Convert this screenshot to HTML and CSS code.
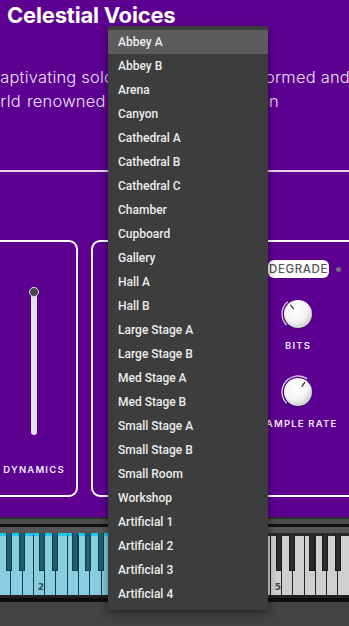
FILE: index.html
```html
<!DOCTYPE html>
<html lang="en">
<head>
    <meta charset="UTF-8">
    <meta name="viewport" content="width=device-width, initial-scale=1.0">
    <title>Celestial Voices</title>
    <link rel="stylesheet" href="styles.css">
</head>
<body>
    <div class="ui">
        <h1 class="title">Celestial Voices</h1>
        <p class="blurb">
            <span class="line line-1">Captivating solo vocals, purely performed and</span>
            <span class="line line-2">world renowned soloists, recorded on</span>
        </p>
        <hr class="rule">

        <div class="panels">
            <section class="panel panel-dyn">
                <div class="slider">
                    <div class="track"></div>
                    <div class="thumb"></div>
                </div>
                <div class="label">DYNAMICS</div>
            </section>

            <section class="panel panel-fx">
                <div class="reverb"></div>
                <div class="degrade">
                    <div class="degrade-head">
                        <span class="pill">DEGRADE</span>
                        <span class="led"></span>
                    </div>
                    <div class="knob knob-bits">
                        <svg width="34" height="34" viewBox="0 0 34 34">
                            <defs>
                                <radialGradient id="cap" cx="40%" cy="35%" r="70%">
                                    <stop offset="0" stop-color="#ffffff"/>
                                    <stop offset="0.6" stop-color="#f4f4f4"/>
                                    <stop offset="1" stop-color="#c9c9c9"/>
                                </radialGradient>
                            </defs>
                            <path d="M5.69 28.31 A16 16 0 0 1 6.72 4.74" fill="none" stroke="#d9c4ea" stroke-width="1.4"/>
                            <circle cx="17" cy="17" r="14" fill="url(#cap)"/>
                            <line x1="12.5" y1="11.64" x2="9.6" y2="8.2" stroke="#333" stroke-width="1.3" stroke-linecap="round"/>
                        </svg>
                    </div>
                    <div class="label">BITS</div>
                    <div class="knob">
                        <svg width="34" height="34" viewBox="0 0 34 34">
                            <path d="M5.69 28.31 A16 16 0 0 1 26.18 3.89" fill="none" stroke="#d9c4ea" stroke-width="1.4"/>
                            <circle cx="17" cy="17" r="14" fill="url(#cap)"/>
                            <line x1="21.02" y1="11.27" x2="23.6" y2="7.6" stroke="#333" stroke-width="1.3" stroke-linecap="round"/>
                        </svg>
                    </div>
                    <div class="label">SAMPLE RATE</div>
                </div>
            </section>
        </div>
    </div>

    <div class="keybed">
        <div class="rail"></div>
        <div class="keys" id="keys"></div>
        <div class="base"></div>
    </div>

    <ul class="menu">
        <li class="active">Abbey A</li>
        <li>Abbey B</li>
        <li>Arena</li>
        <li>Canyon</li>
        <li>Cathedral A</li>
        <li>Cathedral B</li>
        <li>Cathedral C</li>
        <li>Chamber</li>
        <li>Cupboard</li>
        <li>Gallery</li>
        <li>Hall A</li>
        <li>Hall B</li>
        <li>Large Stage A</li>
        <li>Large Stage B</li>
        <li>Med Stage A</li>
        <li>Med Stage B</li>
        <li>Small Stage A</li>
        <li>Small Stage B</li>
        <li>Small Room</li>
        <li>Workshop</li>
        <li>Artificial 1</li>
        <li>Artificial 2</li>
        <li>Artificial 3</li>
        <li>Artificial 4</li>
    </ul>

    <script>
        // keyboard: one octave is 79px wide, C2 starts at x = 32
        const octave = 79;
        const whiteW = octave / 7;
        const semi = octave / 12;
        const c2 = 32.1;
        const whiteSteps = [0, 2, 4, 5, 7, 9, 11];
        const blackSteps = [1, 3, 6, 8, 10];
        const keys = document.getElementById('keys');

        // first visible key is G1
        const firstLeft = c2 - octave + 4 * whiteW;
        keys.style.paddingLeft = firstLeft + 'px';

        for (let oct = 1; oct <= 5; oct++) {
            const cLeft = c2 + (oct - 2) * octave;
            whiteSteps.forEach(function (step, i) {
                const left = cLeft + i * whiteW;
                if (left < firstLeft - 1 || left > 349) return;
                const key = document.createElement('div');
                key.className = 'white ' + (oct < 4 ? 'in-range' : 'out-range');
                if (step === 0) {
                    key.innerHTML = '<span class="oct">' + oct + '</span>';
                }
                keys.appendChild(key);
            });
            blackSteps.forEach(function (step) {
                const center = cLeft + (step + 0.5) * semi;
                if (center < -4 || center > 353) return;
                const key = document.createElement('div');
                key.className = 'black ' + (oct < 4 ? 'in-range' : 'out-range');
                key.style.left = (center - 3) + 'px';
                keys.appendChild(key);
            });
        }
    </script>
</body>
</html>
```

FILE: styles.css
```css
body {
    margin: 0;
    width: 349px;
    height: 626px;
    overflow: hidden;
    position: relative;
    background-color: #434343;
    font-family: Inter, "Noto Sans", sans-serif;
}

.ui {
    background-color: #5d0091;
    height: 517px;
    overflow: hidden;
    color: #fff;
}

.title {
    margin: 0;
    padding: 1px 0 0 7px;
    font-size: 22px;
    line-height: 28px;
    font-weight: 700;
    letter-spacing: -0.2px;
}

.blurb {
    margin: 36px 0 0;
    font-size: 16.5px;
    line-height: 24px;
    font-weight: 300;
    letter-spacing: 0.2px;
    color: #ebe0f3;
    white-space: nowrap;
}

.blurb .line {
    display: block;
}

.line-1 {
    margin-left: -12px;
}

.line-2 {
    margin-left: -23px;
    word-spacing: 1.3px;
}

.rule {
    margin: 57px 0 0;
    border: 0;
    height: 2px;
    background-color: #e4d3ee;
}

.panels {
    display: flex;
    gap: 13px;
    margin-top: 68px;
    height: 257px;
}

.panel {
    flex: none;
    box-sizing: border-box;
    height: 100%;
    border: 2px solid #fff;
    border-radius: 9px;
}

.panel-dyn {
    width: 88px;
    margin-left: -10px;
    padding-top: 45px;
    display: flex;
    flex-direction: column;
    align-items: center;
}

.slider {
    position: relative;
    width: 10px;
    height: 148px;
    display: flex;
    justify-content: center;
}

.track {
    width: 6px;
    height: 100%;
    background-color: #e2e2e2;
    border-radius: 3px;
}

.thumb {
    position: absolute;
    top: 0;
    left: 0;
    width: 10px;
    height: 10px;
    box-sizing: border-box;
    border-radius: 50%;
    background-color: #474747;
    border: 1.5px solid #d8d8d8;
}

.label {
    font-size: 9.5px;
    font-weight: 600;
    letter-spacing: 1.2px;
    line-height: 14px;
    color: #f2eaf7;
    white-space: nowrap;
}

.panel-dyn .label {
    margin-top: 28px;
}

.panel-fx {
    width: 300px;
    padding-top: 18px;
    display: flex;
}

.reverb {
    flex: none;
    width: 165px;
}

.degrade {
    flex: none;
    width: 80px;
    display: flex;
    flex-direction: column;
    align-items: center;
}

.degrade-head {
    align-self: flex-start;
    padding-left: 10px;
    display: flex;
    align-items: center;
    gap: 7px;
}

.pill {
    width: 61px;
    height: 18px;
    line-height: 18px;
    text-align: center;
    background-color: #fff;
    color: #555;
    border-radius: 6px;
    font-size: 11.5px;
    font-weight: 500;
    letter-spacing: 0.6px;
}

.led {
    width: 5px;
    height: 5px;
    border-radius: 50%;
    background-color: #76688a;
}

.knob {
    width: 34px;
    height: 34px;
    margin-top: 22px;
}

.knob svg {
    display: block;
    filter: drop-shadow(0 1px 1px rgba(0, 0, 0, 0.35));
}

.knob-bits {
    margin-top: 19px;
}

.knob + .label {
    margin-top: 8px;
}

/* keyboard */

.rail {
    height: 16px;
    background: linear-gradient(#2e2e2e 0 2px, #4b4b4b 2px 7px, #111 7px 10px, #555 10px 16px);
}

.keys {
    position: relative;
    height: 62px;
    display: flex;
    box-sizing: border-box;
}

.white {
    flex: 0 0 11.286px;
    box-sizing: border-box;
    height: 100%;
    border-top: 3px solid;
    border-right: 1px solid;
    display: flex;
    align-items: flex-end;
}

.white.in-range {
    background-color: #88cde0;
    border-top-color: #1ec6f2;
    border-right-color: #163d48;
}

.white.out-range {
    background-color: #cfcfcf;
    border-top-color: #2a2a2a;
    border-right-color: #262626;
}

.oct {
    padding: 0 0 3px 4px;
    font-family: "DejaVu Sans", sans-serif;
    font-size: 9px;
    font-weight: 700;
    line-height: 10px;
}

.in-range .oct {
    color: #24505c;
}

.out-range .oct {
    color: #444;
}

.black {
    position: absolute;
    top: 0;
    width: 6px;
    height: 38px;
    box-sizing: border-box;
}

.black.in-range {
    background-color: #1f5f6f;
    border: 1px solid #143e49;
    border-top: 0;
}

.black.out-range {
    background-color: #2b2b2b;
    border: 1px solid #1a1a1a;
    border-top: 0;
}

.base {
    height: 31px;
    background: linear-gradient(#202020 0 3px, #0d0d0d 3px 7px, #434343 7px);
}

/* reverb dropdown */

.menu {
    position: absolute;
    left: 108px;
    top: 26px;
    width: 160px;
    margin: 0;
    padding: 4px 0;
    list-style: none;
    background-color: #3d3d3d;
    border-radius: 2px;
    box-shadow: 0 3px 10px rgba(0, 0, 0, 0.45);
    font-family: Roboto, sans-serif;
    font-weight: 500;
    font-size: 12px;
    color: #ececec;
}

.menu li {
    height: 24px;
    line-height: 24px;
    padding-left: 10px;
}

.menu .active {
    background-color: #5b5b5b;
}
```
